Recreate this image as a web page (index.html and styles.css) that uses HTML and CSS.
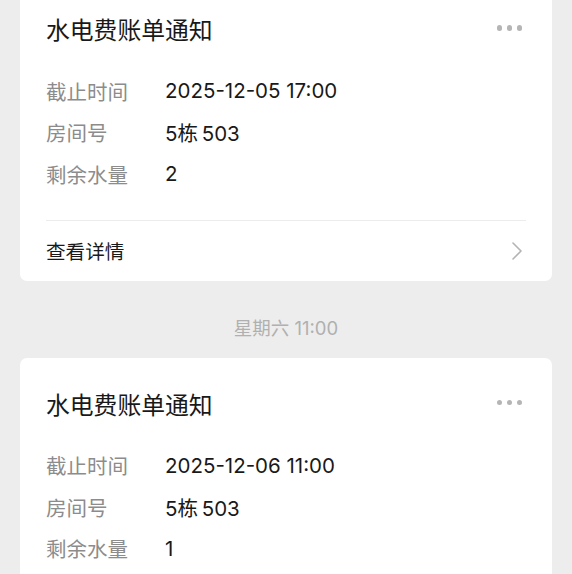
FILE: index.html
```html
<!DOCTYPE html>
<html lang="zh-CN">
<head>
<meta charset="utf-8">
<title>水电费账单通知</title>
<link rel="stylesheet" href="styles.css">
</head>
<body>
<div class="feed">
  <div class="card">
    <div class="card-head">
      <div class="card-title">水电费账单通知</div>
      <div class="more"><i></i><i></i><i></i></div>
    </div>
    <div class="rows">
      <div class="row"><span class="label">截止时间</span><span class="value">2025-12-05 17:00</span></div>
      <div class="row"><span class="label">房间号</span><span class="value">5栋&#8201;503</span></div>
      <div class="row"><span class="label">剩余水量</span><span class="value">2</span></div>
    </div>
    <div class="footer">
      <span class="footer-text">查看详情</span>
      <svg class="chev" width="10" height="18" viewBox="0 0 10 18"><path d="M1 1 L9 9 L1 17" fill="none" stroke="#b3b3b3" stroke-width="1.6" stroke-linecap="round" stroke-linejoin="round"/></svg>
    </div>
  </div>

  <div class="time">星期六 11:00</div>

  <div class="card">
    <div class="card-head">
      <div class="card-title">水电费账单通知</div>
      <div class="more"><i></i><i></i><i></i></div>
    </div>
    <div class="rows">
      <div class="row"><span class="label">截止时间</span><span class="value">2025-12-06 11:00</span></div>
      <div class="row"><span class="label">房间号</span><span class="value">5栋&#8201;503</span></div>
      <div class="row"><span class="label">剩余水量</span><span class="value">1</span></div>
    </div>
    <div class="footer">
      <span class="footer-text">查看详情</span>
      <svg class="chev" width="10" height="18" viewBox="0 0 10 18"><path d="M1 1 L9 9 L1 17" fill="none" stroke="#b3b3b3" stroke-width="1.6" stroke-linecap="round" stroke-linejoin="round"/></svg>
    </div>
  </div>
</div>
</body>
</html>
```

FILE: styles.css
```css
html, body {
  margin: 0;
  padding: 0;
  background: #ededed;
}
body {
  font-family: Inter, "Noto Sans CJK SC", sans-serif;
  color: #191919;
  overflow: hidden;
}
.feed {
  padding: 0 20px;
  margin-top: -17px;
}
.card {
  background: #ffffff;
  border-radius: 7px;
  padding: 0 26px;
}
.card-head {
  display: flex;
  align-items: center;
  justify-content: space-between;
  padding-top: 32px;
  height: 32px;
}
.card-title {
  font-size: 23.8px;
  line-height: 32px;
  color: #191919;
}
.more {
  display: flex;
  gap: 4.5px;
  margin-right: 4px;
  margin-top: -6px;
}
.more i {
  display: block;
  width: 5.5px;
  height: 5.5px;
  border-radius: 50%;
  background: #b5b5b5;
}
.rows {
  margin-top: 23px;
  padding-bottom: 25px;
  border-bottom: 1px solid #ececec;
}
.row {
  display: flex;
  align-items: center;
  height: 41.5px;
  font-size: 20.5px;
}
.label {
  width: 119px;
  color: #8c8c8c;
}
.value {
  color: #191919;
}
.footer {
  display: flex;
  align-items: center;
  justify-content: space-between;
  height: 60px;
}
.footer-text {
  font-size: 19.6px;
  color: #191919;
}
.chev {
  margin-right: 4px;
}
.time {
  text-align: center;
  font-size: 18.5px;
  line-height: 22px;
  color: #b0b0b0;
  padding-top: 36px;
  margin-bottom: 19px;
}
```
